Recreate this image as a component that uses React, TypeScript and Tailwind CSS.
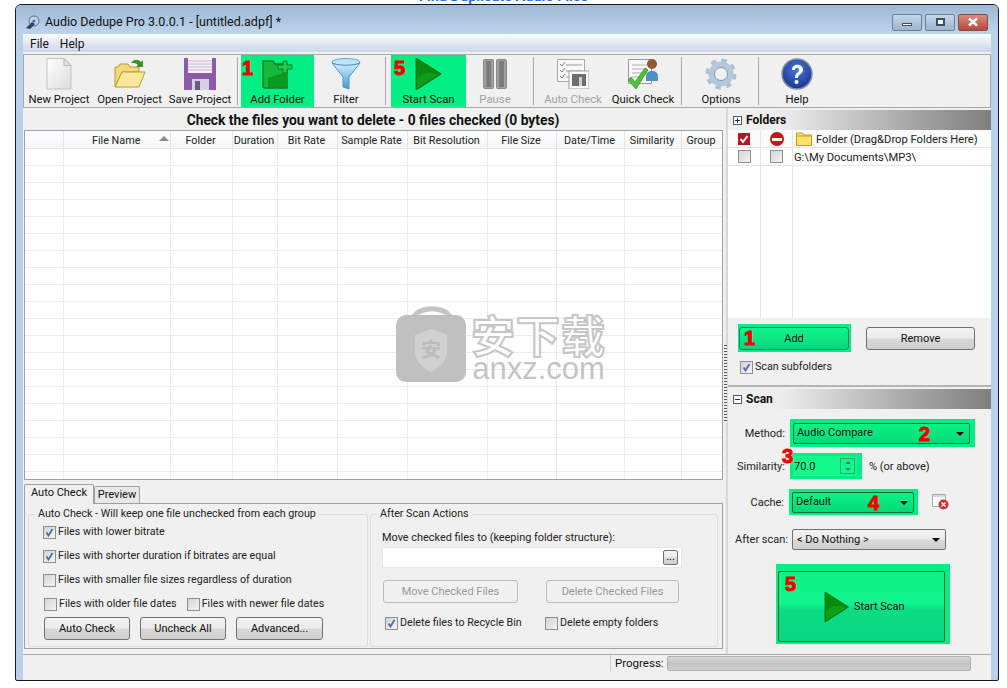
import type { ReactNode } from "react";

const FONT = "font-['Roboto',sans-serif]";

function Num({ n, className }: { n: string; className: string }) {
  return (
    <span className={`absolute font-['Liberation_Sans',sans-serif] font-black text-[#f00000] text-[20px] leading-none [-webkit-text-stroke:1px_#f00000] ${className}`}>
      {n}
    </span>
  );
}

function NewIcon() {
  return (
    <svg width="28" height="32" viewBox="0 0 28 32">
      <defs>
        <linearGradient id="pg" x1="0" y1="0" x2="1" y2="1">
          <stop offset="0" stopColor="#ffffff" />
          <stop offset="1" stopColor="#dcdcdc" />
        </linearGradient>
      </defs>
      <path d="M2 .5h17l7 7v23.5H2z" fill="url(#pg)" stroke="#c4c4c4" />
      <path d="M19 .5v7h7z" fill="#e4e4e4" stroke="#b8b8b8" />
    </svg>
  );
}

function OpenIcon() {
  return (
    <svg width="32" height="32" viewBox="0 0 32 32">
      <path d="M1 29 1 9h3l2-3h8l2 3h9v5H8z" fill="#f5d976" stroke="#b89a3a" />
      <path d="M1 29 8 14h23l-6 15z" fill="#fbe89a" stroke="#b89a3a" />
      <path d="M17 5c3-4 7-4 10-1l2-2v7h-7l2-2c-2-2-4-2-7-2z" fill="#3f8f1e" />
    </svg>
  );
}

function SaveIcon() {
  return (
    <svg width="32" height="32" viewBox="0 0 32 32">
      <path d="M0 0h32v32H0z" fill="#8a5ba8" />
      <path d="M4 0h24v15H4z" fill="#f4f0f6" />
      <path d="M4 3h24M4 6h24M4 9h24M4 12h24" stroke="#c9b7d6" />
      <path d="M8 21h17v11H8z" fill="#d8cfe0" />
      <path d="M11 23h5v9h-5z" fill="#6b5a7c" />
    </svg>
  );
}

function AddFolderIcon() {
  return (
    <svg width="32" height="32" viewBox="0 0 32 32">
      <path d="M1 3h10l2 3h12v24H3a2 2 0 0 1-2-2z" fill="#14b83a" stroke="#0c7d24" strokeWidth="1.5" />
      <path d="M6 29 6 20 25 14V29z" fill="#0a9a20" />
      <path d="M21 3h4v4h5v4h-5v4h-4v-4h-5V7h5z" fill="#1fcf43" stroke="#0c7d24" />
    </svg>
  );
}

function FilterIcon() {
  return (
    <svg width="30" height="32" viewBox="0 0 30 32">
      <defs>
        <linearGradient id="fg" x1="0" y1="0" x2="0" y2="1">
          <stop offset="0" stopColor="#d8eefb" />
          <stop offset="1" stopColor="#3f9bd6" />
        </linearGradient>
      </defs>
      <ellipse cx="15" cy="4" rx="14" ry="3.5" fill="#bfe3f7" stroke="#5fa8d8" />
      <path d="M1 5 12 19v10l6 2V19L29 5c-6 3-22 3-28 0z" fill="url(#fg)" stroke="#4a94c8" />
    </svg>
  );
}

function PlayIcon({ size = 32 }: { size?: number }) {
  return (
    <svg width={size * 0.82} height={size} viewBox="0 0 26 32">
      <path d="M1 0 26 16 1 32z" fill="#0b8a10" stroke="#0a6f10" />
      <path d="M2 20C8 14 16 14 23 17L2 30z" fill="#0d9e18" />
    </svg>
  );
}

function PauseIcon() {
  return (
    <svg width="24" height="30" viewBox="0 0 24 30">
      <rect x=".5" y=".5" width="10" height="29" rx="1" fill="#a0a0a0" stroke="#8a8a8a" />
      <rect x="13.5" y=".5" width="10" height="29" rx="1" fill="#a0a0a0" stroke="#8a8a8a" />
      <path d="M3 2h5v26H3zM16 2h5v26h-5z" fill="#7c7c7c" />
    </svg>
  );
}

function AutoCheckIcon() {
  return (
    <svg width="32" height="30" viewBox="0 0 32 30">
      <path d="M.5 .5h27v22H.5z" fill="#f8f8f8" stroke="#a8a8a8" />
      <path d="M9 6h16M9 12h16M9 18h8" stroke="#9a9a9a" />
      <path d="M3 5l2 2 3-4M3 11l2 2 3-4M3 17l2 2 3-4" stroke="#7f7f7f" fill="none" />
      <path d="M12 12h20v18H12z" fill="#fff" stroke="#9c9c9c" />
      <path d="M15 15h14v12H15z" fill="#6e6e6e" />
      <path d="M22 18h3v9h-3z" fill="#cfcfcf" />
    </svg>
  );
}

function QuickCheckIcon() {
  return (
    <svg width="32" height="32" viewBox="0 0 32 32">
      <path d="M1.500 1.500h23v24h-23z" fill="#f8f8f8" stroke="#9a9a9a" />
      <path d="M5 7h15M5 11h15M5 15h15M5 19h10" stroke="#b0b0b0" />
      <path d="M19 19c0-5 3-6 6-6s6 1 6 6v4H19z" fill="#4f8fc4" />
      <circle cx="25" cy="6" r="5" fill="#8a5a34" />
      <path d="M1 22l3-3 4 5L18 10l3 2L9 31z" fill="#4ec238" stroke="#2f8f22" strokeWidth=".7" />
    </svg>
  );
}

function OptionsIcon() {
  return (
    <svg width="32" height="32" viewBox="0 0 32 32">
      <circle cx="16" cy="16" r="13.500" fill="none" stroke="#a9c0d6" strokeWidth="4" strokeDasharray="5.300 5.300" />
      <circle cx="16" cy="16" r="9.500" fill="none" stroke="#b4c8da" strokeWidth="6" />
      <circle cx="16" cy="16" r="6.500" fill="#f0f0f0" stroke="#7f97ad" />
    </svg>
  );
}

function HelpIcon() {
  return (
    <svg width="32" height="32" viewBox="0 0 32 32">
      <defs>
        <radialGradient id="hg" cx=".5" cy=".35" r=".7">
          <stop offset="0" stopColor="#4c78d8" />
          <stop offset="1" stopColor="#12308f" />
        </radialGradient>
      </defs>
      <circle cx="16" cy="16" r="15" fill="url(#hg)" stroke="#8a8f9c" strokeWidth="1.500" />
      <path d="M11 12c0-7 11-7 11 0 0 4-5 4-5 8h-3c0-6 4-5 4-8 0-3-4-3-4 0z" fill="#fff" />
      <circle cx="15.500" cy="24" r="2" fill="#fff" />
    </svg>
  );
}

function ToolButton({ label, icon, className, disabled }: { label: string; icon: ReactNode; className: string; disabled?: boolean }) {
  return (
    <div className={`flex flex-col items-center h-full relative shrink-0 ${className}`}>
      <div className="h-[33px] mt-[3px] flex items-center justify-center">{icon}</div>
      <div className={`mt-[2px] text-[11.3px] leading-[15px] whitespace-nowrap ${disabled ? "text-[#a0a0a0]" : "text-[#111]"}`}>{label}</div>
    </div>
  );
}

function Sep({ className }: { className: string }) {
  return <div className={`w-px h-[48px] self-center bg-[#a8a8a8] shrink-0 ${className}`} />;
}

function Check({ on, className = "" }: { on?: boolean; className?: string }) {
  return (
    <span className={`inline-flex w-[13px] h-[13px] shrink-0 border border-[#8e8f8f] bg-gradient-to-br from-[#d4d4d4] to-[#f4f4f4] items-center justify-center ${className}`}>
      {on && (
        <svg width="9" height="9" viewBox="0 0 9 9">
          <path d="M1.500 4.500 3.500 7.500 7.500 1" stroke="#4a6cb0" strokeWidth="1.800" fill="none" />
        </svg>
      )}
    </span>
  );
}

function CheckRow({ label, on, className = "" }: { label: string; on?: boolean; className?: string }) {
  return (
    <div className={`flex items-center gap-[2px] text-[10.7px] leading-none text-[#222] whitespace-nowrap ${className}`}>
      <Check on={on} />
      <span>{label}</span>
    </div>
  );
}

function Btn({ children, className = "", disabled }: { children: ReactNode; className?: string; disabled?: boolean }) {
  return (
    <div
      className={`flex items-center justify-center rounded-[3px] border pt-px text-[11px] shrink-0 ${
        disabled
          ? "border-[#bcbcbc] bg-[#f0f0f0] text-[#9a9a9a]"
          : "border-[#707070] bg-[linear-gradient(#f2f2f2_0%,#ebebeb_48%,#d8d8d8_52%,#cfcfcf_100%)] text-[#111]"
      } ${className}`}
    >
      {children}
    </div>
  );
}

function Arrow() {
  return <span className="w-0 h-0 border-x-[4px] border-x-transparent border-t-[4px] border-t-black" />;
}

function GreenCombo({ text, className }: { text: string; className: string }) {
  return (
    <div className={`flex items-center justify-between rounded-[2px] border border-[#0b6d3c] bg-[linear-gradient(#0cf384,#07d878)] pl-[3px] pr-[5px] pt-px text-[11px] text-[#111] ${className}`}>
      <span>{text}</span>
      <Arrow />
    </div>
  );
}

function SectionHead({ title, open }: { title: string; open?: boolean }) {
  return (
    <div className="h-[20px] flex items-center gap-[4px] pl-[5px] bg-[linear-gradient(90deg,#f0f0f0_0%,#ededed_20%,#a6a6a6_70%,#7f7f7f_100%)] text-[12px] font-bold text-[#111]">
      <span className="relative w-[9px] h-[9px] border border-[#4a5a78] bg-white flex items-center justify-center">
        <span className="w-[5px] h-px bg-[#22335a]" />
        {open && <span className="absolute w-px h-[5px] bg-[#22335a]" />}
      </span>
      {title}
    </div>
  );
}

function Watermark() {
  return (
    <div className="absolute left-[371px] top-[171px] flex items-start pointer-events-none">
      <svg width="72" height="82" viewBox="0 0 72 82">
        <path d="M17 18C19 3 53 3 55 18" fill="none" stroke="#c4c4c4" strokeWidth="5" />
        <rect y="13" width="70" height="67" rx="10" fill="#c0c0c0" />
        <path d="M35 27 51 33V50C51 60 42 66 35 70 28 66 19 60 19 50V33z" fill="#d0d0d0" />
        <text x="35" y="55" textAnchor="middle" fontSize="20" fontFamily="'Noto Sans CJK SC',sans-serif" fontWeight="700" fill="#bcbcbc">
          安
        </text>
      </svg>
      <div className="ml-[3px] mt-[10px] flex flex-col items-center">
        <span className="font-['Noto_Sans_CJK_SC',sans-serif] font-bold text-[44px] leading-[44px] tracking-[1px] text-white [-webkit-text-stroke:2px_#c6c6c6]">
          安下载
        </span>
        <span className="font-['Liberation_Sans',sans-serif] text-[31px] leading-[26px] text-[#c4c4c4]">anxz.com</span>
      </div>
    </div>
  );
}

const COLS = [
  { name: "", w: "w-[39px]", pad: "" },
  { name: "File Name", w: "w-[107px]", pad: "pl-[28px]" },
  { name: "Folder", w: "w-[62px]", pad: "justify-center pr-[2px]" },
  { name: "Duration", w: "w-[45px]", pad: "justify-center pr-[2px]" },
  { name: "Bit Rate", w: "w-[60px]", pad: "justify-center pr-[2px]" },
  { name: "Sample Rate", w: "w-[70px]", pad: "justify-center pr-[2px]" },
  { name: "Bit Resolution", w: "w-[80px]", pad: "justify-center pr-[2px]" },
  { name: "File Size", w: "w-[69px]", pad: "justify-center pr-[2px]" },
  { name: "Date/Time", w: "w-[68px]", pad: "justify-center pr-[2px]" },
  { name: "Similarity", w: "w-[57px]", pad: "justify-center pr-[2px]" },
  { name: "Group", w: "w-[41px]", pad: "justify-center pr-[2px]" },
];

function FileTable() {
  return (
    <div className="relative ml-px h-[350px] border border-[#a0a0a0] bg-white overflow-hidden">
      <div className="flex h-[18px] bg-[linear-gradient(#fff,#f4f6f9)] border-b border-[#e4e4e4]">
        {COLS.map((c) => (
          <div key={c.name} className={`relative flex items-center pt-[3px] text-[10.8px] text-[#222] whitespace-nowrap border-r border-[#e4e4e4] shrink-0 ${c.w} ${c.pad}`}>
            {c.name}
            {c.name === "File Name" && (
              <span className="absolute right-[1px] top-[5px] w-0 h-0 border-x-[5px] border-x-transparent border-b-[5px] border-b-[#8a8a8a]" />
            )}
          </div>
        ))}
      </div>
      {Array.from({ length: 20 }).map((_, r) => (
        <div key={r} className="flex h-[17px] border-b border-[#ececec]">
          {COLS.map((c) => (
            <div key={c.name} className={`border-r border-[#ececec] shrink-0 ${c.w}`} />
          ))}
        </div>
      ))}
      <Watermark />
    </div>
  );
}

function AutoCheckGroup() {
  return (
    <fieldset className="w-[340px] h-[141px] border border-[#d5dfe5] rounded-[3px]">
      <legend className="ml-[6px] px-[3px] text-[10.7px] leading-[16px] text-[#222]">Auto Check - Will keep one file unchecked from each group</legend>
      <div className="pl-[14px]">
        <CheckRow on label="Files with lower bitrate" className="mt-[2px] h-[16px]" />
        <CheckRow on label="Files with shorter duration if bitrates are equal" className="mt-[8px] h-[16px]" />
        <CheckRow label="Files with smaller file sizes regardless of duration" className="mt-[8px] h-[16px]" />
        <div className="flex mt-[8px] gap-[10px] ml-px">
          <CheckRow label="Files with older file dates" className="h-[16px]" />
          <CheckRow label="Files with newer file dates" className="h-[16px]" />
        </div>
        <div className="flex gap-[10px] mt-[5px] ml-px">
          <Btn className="w-[86px] h-[23px]">Auto Check</Btn>
          <Btn className="w-[86px] h-[23px]">Uncheck All</Btn>
          <Btn className="w-[87px] h-[23px]">Advanced...</Btn>
        </div>
      </div>
    </fieldset>
  );
}

function AfterScanGroup() {
  return (
    <fieldset className="w-[348px] h-[141px] ml-[2px] border border-[#d5dfe5] rounded-[3px]">
      <legend className="ml-[6px] px-[3px] text-[10.7px] leading-[16px] text-[#222]">After Scan Actions</legend>
      <div className="pl-[11px]">
        <div className="mt-[9px] text-[10.9px] leading-[14px] text-[#222]">Move checked files to (keeping folder structure):</div>
        <div className="mt-[2px] w-[300px] h-[21px] bg-white border border-[#e6e6e6] flex items-center justify-end pr-[3px]">
          <Btn className="w-[15px] h-[15px] !rounded-[2px] leading-none">
            <span className="-mt-[4px]">...</span>
          </Btn>
        </div>
        <div className="flex mt-[12px] ml-px gap-[28px]">
          <Btn disabled className="w-[135px] h-[23px]">Move Checked Files</Btn>
          <Btn disabled className="w-[133px] h-[23px]">Delete Checked Files</Btn>
        </div>
        <div className="flex mt-[12px] ml-[3px]">
          <CheckRow on label="Delete files to Recycle Bin" className="w-[160px] h-[16px]" />
          <CheckRow label="Delete empty folders" className="h-[16px]" />
        </div>
      </div>
    </fieldset>
  );
}

function LeftPane() {
  return (
    <div className="w-[700px] shrink-0 flex flex-col">
      <div className="h-[22px] flex items-center justify-center text-[13.8px] font-bold text-[#111] pt-[2px]">
        Check the files you want to delete - 0 files checked (0 bytes)
      </div>
      <FileTable />
      <div className="h-[4px]" />
      <div className="flex items-end h-[19px] pl-px">
        <div className="w-[70px] h-[20px] pb-[2px] -mb-px relative bg-[#f0f0f0] border border-b-0 border-[#a0a0a0] rounded-t-[2px] flex items-center justify-center text-[11px] text-[#111]">
          Auto Check
        </div>
        <div className="w-[46px] h-[17px] bg-[#e8e8e8] border border-b-0 border-[#a0a0a0] rounded-t-[2px] flex items-center justify-center text-[11px] text-[#111]">
          Preview
        </div>
      </div>
      <div className="ml-px h-[146px] border border-[#a0a0a0] flex px-[3px] pt-[2px]">
        <AutoCheckGroup />
        <AfterScanGroup />
      </div>
    </div>
  );
}

function Splitter() {
  return (
    <div className="w-[5px] shrink-0 border-r-2 border-[#d8d8d8] flex flex-col justify-center">
      <div className="w-[3px] h-[78px] ml-[1px] mt-[6px] bg-[repeating-linear-gradient(#555_0px,#555_1px,#f0f0f0_1px,#f0f0f0_3px)]" />
    </div>
  );
}

function FoldersSection() {
  return (
    <>
      <SectionHead title="Folders" open />
      <div className="h-[188px] bg-white text-[11.2px] text-[#222]">
        <div className="flex h-[18px] border-b border-[#e6e6e6] bg-[#fafafa]">
          <div className="w-[33px] border-r border-[#e6e6e6] flex items-center justify-center pt-px">
            <span className="w-[12px] h-[12px] bg-[#b01824] flex items-center justify-center">
              <svg width="10" height="10" viewBox="0 0 10 10">
                <path d="M1.500 5 4 8 8.500 2" stroke="#fff" strokeWidth="2" fill="none" />
              </svg>
            </span>
          </div>
          <div className="w-[32px] border-r border-[#e6e6e6] flex items-center justify-center pt-px">
            <span className="w-[14px] h-[14px] rounded-full bg-[#c01818] flex items-center justify-center">
              <span className="w-[10px] h-[3px] bg-white" />
            </span>
          </div>
          <div className="flex items-center pl-[3px] gap-[4px] pt-[3px]">
            <svg className="-mt-[2px]" width="16" height="14" viewBox="0 0 16 14">
              <path d="M.5 1h6l1.500 2h7.500v10.500H.5z" fill="#fde26a" stroke="#c89a20" />
              <path d="M.5 4h15" stroke="#c89a20" />
            </svg>
            Folder (Drag&amp;Drop Folders Here)
          </div>
        </div>
        <div className="flex h-[18px] border-b border-[#e6e6e6]">
          <div className="w-[33px] border-r border-[#e6e6e6] flex items-center justify-center">
            <Check />
          </div>
          <div className="w-[32px] border-r border-[#e6e6e6] flex items-center justify-center">
            <Check />
          </div>
          <div className="flex items-center pl-[1px] pt-[3px]">G:\My Documents\MP3\</div>
        </div>
        <div className="flex h-[152px]">
          <div className="w-[33px] border-r border-[#e6e6e6]" />
          <div className="w-[32px] border-r border-[#e6e6e6]" />
        </div>
      </div>
      <div className="h-[69px] pl-[10px] pt-[6px] border-b-2 border-[#b4b4b4]">
        <div className="flex">
          <div className="relative w-[113px] h-[28px] bg-[#00ee82] flex items-center pl-[1px] pt-px">
            <div className="w-[110px] h-[23px] rounded-[3px] border border-[#0f7a70] bg-[linear-gradient(#10f48a,#08d67c)] flex items-center justify-center pt-[2px] text-[11px] text-[#111]">
              Add
            </div>
            <Num n="1" className="left-[6px] top-[4px]" />
          </div>
          <Btn className="w-[109px] h-[23px] ml-[15px] mt-[3px]">Remove</Btn>
        </div>
        <CheckRow on label="Scan subfolders" className="mt-[7px] ml-[2px] h-[16px]" />
      </div>
    </>
  );
}

function ScanSection() {
  return (
    <>
      <SectionHead title="Scan" />
      <div className="text-[11px] text-[#222]">
        <div className="flex items-center mt-[10px]">
          <span className="w-[57px] text-right shrink-0 pt-[2px]">Method:</span>
          <div className="relative ml-[5px] w-[185px] h-[28px] bg-[#00ee82] flex items-center pl-[3px]">
            <GreenCombo text="Audio Compare" className="w-[177px] h-[21px]" />
            <Num n="2" className="left-[129px] top-[5px]" />
          </div>
        </div>
        <div className="flex items-center mt-[6px]">
          <span className="w-[57px] text-right shrink-0 pt-[2px]">Similarity:</span>
          <div className="relative ml-[5px] w-[72px] h-[26px] bg-[#00ee82] flex items-center pl-[3px]">
            <div className="w-[64px] h-[20px] bg-[#10fb8c] flex items-center justify-between pr-[2px] pl-[1px] text-[#111]">
              <span className="pt-[2px]">70.0</span>
              <div className="w-[15px] h-[16px] border border-[#3c9f78] flex flex-col items-center justify-around">
                <span className="w-0 h-0 border-x-[3px] border-x-transparent border-b-[3px] border-b-[#3f7f6a]" />
                <span className="w-0 h-0 border-x-[3px] border-x-transparent border-t-[3px] border-t-[#3f7f6a]" />
              </div>
            </div>
            <Num n="3" className="-left-[8px] -top-[7px]" />
          </div>
          <span className="ml-[7px] pt-[2px]">% (or above)</span>
        </div>
        <div className="flex items-center mt-[10px]">
          <span className="w-[56px] text-right shrink-0 pt-[2px]">Cache:</span>
          <div className="relative ml-[5px] w-[129px] h-[26px] bg-[#00ee82] flex items-center pl-[3px]">
            <GreenCombo text="Default" className="w-[122px] h-[21px]" />
            <Num n="4" className="left-[79px] top-[4px]" />
          </div>
          <svg className="ml-[14px]" width="17" height="16" viewBox="0 0 17 16">
            <path d="M.5 .5h13v12H.5z" fill="#fff" stroke="#a8a8a8" />
            <path d="M1 1h12v2H1z" fill="#d8d8d8" />
            <circle cx="11.500" cy="10.500" r="5" fill="#c4333a" />
            <path d="M9.500 8.500l4 4m0-4-4 4" stroke="#fff" strokeWidth="1.300" />
          </svg>
        </div>
        <div className="flex items-center mt-[14px]">
          <span className="w-[60px] text-right shrink-0 pt-px">After scan:</span>
          <div className="ml-[4px] w-[154px] h-[21px] rounded-[2px] border border-[#707070] bg-[linear-gradient(#f2f2f2_0%,#ebebeb_48%,#d8d8d8_52%,#cfcfcf_100%)] flex items-center justify-between pl-[4px] pr-[5px] pt-px text-[#111]">
            <span>&lt; Do Nothing &gt;</span>
            <Arrow />
          </div>
        </div>
        <div className="relative ml-[48px] mt-[14px] w-[174px] h-[80px] bg-[#00ee82] pl-[2px] pt-[7px]">
          <div className="w-[167px] h-[71px] rounded-[2px] border border-[#0b6d3c] bg-[linear-gradient(#0cf384_0%,#12f48e_45%,#0bdc82_55%,#0bd482_100%)] flex items-center justify-center gap-[5px] pl-[6px] text-[#111]">
            <PlayIcon size={30} />
            <span className="pt-px">Start Scan</span>
          </div>
          <Num n="5" className="left-[9px] top-[10px]" />
        </div>
      </div>
    </>
  );
}

export default function App() {
  return (
    <div className={`w-[1007px] h-[688px] bg-white overflow-hidden ${FONT}`}>
      <div className="h-[4px] overflow-hidden flex justify-center items-end">
        <span className="text-[14.5px] font-bold leading-[14px] text-[#1a6fe0] whitespace-nowrap">Find Duplicate Audio Files</span>
      </div>
      <div className="ml-[15px] w-[984px] h-[677px] border border-[#1a1a1a] rounded-t-[6px] rounded-b-[2px] bg-[#b9d1ea] flex flex-col overflow-hidden">
        <div className="h-[29px] shrink-0 flex items-center bg-[linear-gradient(#9fb9d4,#bcd4ec)] pl-[9px] pt-[5px]">
          <svg width="16" height="16" viewBox="0 0 16 16">
            <circle cx="9" cy="7" r="5" fill="#c7d6e6" stroke="#5a6f8a" />
            <path d="M1 14 7 8l3 2-5 5z" fill="#2c3e5a" />
            <circle cx="9" cy="7" r="1.500" fill="#3a6fb0" />
          </svg>
          <span className="ml-[4px] text-[12.5px] text-[#111]">Audio Dedupe Pro 3.0.0.1 - [untitled.adpf] *</span>
          <div className="ml-auto mr-[10px] flex gap-[3px]">
            <div className="w-[30px] h-[17px] rounded-[2px] border border-[#6a7f96] bg-[linear-gradient(#c4d6e8,#9fb5cc)] flex items-center justify-center">
              <span className="w-[10px] h-[3px] mt-[4px] bg-white border border-[#3f4f63]" />
            </div>
            <div className="w-[30px] h-[17px] rounded-[2px] border border-[#6a7f96] bg-[linear-gradient(#c4d6e8,#9fb5cc)] flex items-center justify-center">
              <span className="w-[9px] h-[8px] border-2 border-[#3f4f63] bg-white" />
            </div>
            <div className="w-[30px] h-[17px] rounded-[2px] border border-[#8a4a44] bg-[linear-gradient(#dc8a7c,#b84a3c)] flex items-center justify-center">
              <svg width="12" height="10" viewBox="0 0 12 10">
                <path d="M2 1.500 10 8.500M10 1.500 2 8.500" stroke="#fff" strokeWidth="2.500" />
              </svg>
            </div>
          </div>
        </div>
        <div className="mx-[7px] w-[968px] flex-1 flex flex-col bg-[#f0f0f0] min-h-0">
          <div className="h-[18px] shrink-0 flex items-center gap-[11px] pl-[7px] pt-[2px] text-[12px] text-[#111] bg-[linear-gradient(#fafbfd,#cdd6e8)]">
            <span>File</span>
            <span>Help</span>
          </div>
          <div className="relative mt-[2px] h-[54px] shrink-0 border border-[#a8a8a8] flex bg-[#f0f0f0]">
            <ToolButton label="New Project" icon={<NewIcon />} className="w-[70px]" />
            <ToolButton label="Open Project" icon={<OpenIcon />} className="w-[71px]" />
            <ToolButton label="Save Project" icon={<SaveIcon />} className="w-[70px]" />
            <Sep className="ml-[2px] mr-[3px]" />
            <ToolButton label="Add Folder" icon={<AddFolderIcon />} className="w-[73px] bg-[#00ee82]" />
            <ToolButton label="Filter" icon={<FilterIcon />} className="w-[64px]" />
            <Sep className="ml-[7px] mr-[5px]" />
            <ToolButton label="Start Scan" icon={<PlayIcon />} className="w-[75px] bg-[#00ee82]" />
            <ToolButton label="Pause" icon={<PauseIcon />} className="w-[58px]" disabled />
            <Sep className="ml-[9px] mr-[3px]" />
            <ToolButton label="Auto Check" icon={<AutoCheckIcon />} className="w-[72px]" disabled />
            <ToolButton label="Quick Check" icon={<QuickCheckIcon />} className="w-[68px]" />
            <Sep className="ml-[4px] mr-[2px]" />
            <ToolButton label="Options" icon={<OptionsIcon />} className="w-[74px]" />
            <Sep className="mr-[2px]" />
            <ToolButton label="Help" icon={<HelpIcon />} className="w-[72px]" />
            <Num n="1" className="left-[218px] top-[3px]" />
            <Num n="5" className="left-[370px] top-[3px]" />
          </div>
          <div className="flex h-[546px] shrink-0">
            <LeftPane />
            <Splitter />
            <div className="w-[263px] shrink-0 pt-[2px]">
              <FoldersSection />
              <div className="h-[2px]" />
              <ScanSection />
            </div>
          </div>
          <div className="h-[18px] shrink-0 border-t border-[#a8a8a8] flex items-center text-[11.5px] text-[#111]">
            <div className="ml-[587px] h-full border-l border-[#d0d0d0] pl-[4px] flex items-center">Progress:</div>
            <div className="ml-[3px] w-[304px] h-[15px] rounded-[2px] border border-[#b0b0b0] bg-[linear-gradient(#d8d8d8,#c4c4c4_50%,#d0d0d0)]" />
          </div>
        </div>
      </div>
    </div>
  );
}
